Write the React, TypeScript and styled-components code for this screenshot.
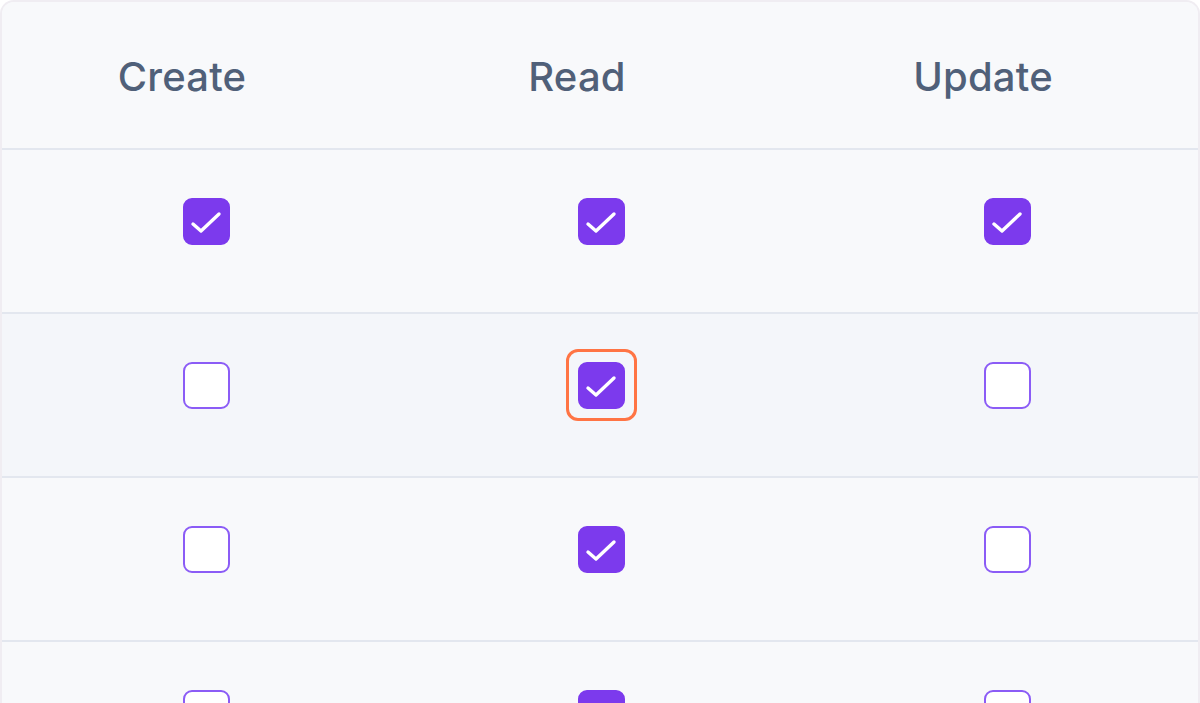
import React from "react";
import styled, { createGlobalStyle, css } from "styled-components";

const GlobalStyle = createGlobalStyle`
  html, body {
    margin: 0;
    padding: 0;
    background: #ffffff;
    font-family: Inter, "Noto Sans", sans-serif;
  }
  #root { width: 1200px; height: 703px; overflow: hidden; }
`;

const Table = styled.div`
  box-sizing: border-box;
  width: 1200px;
  border: 2px solid #f0edf2;
  border-bottom: none;
  border-radius: 14px 14px 0 0;
  background: #f8f9fb;
  overflow: hidden;
`;

const Row = styled.div<{ $header?: boolean; $hover?: boolean }>`
  display: grid;
  grid-template-columns: 384px 406px 1fr;
  border-bottom: 2px solid #e3e7ef;
  background: ${(p) => (p.$hover ? "#f4f6fa" : "#f8f9fb")};
  height: ${(p) => (p.$header ? "146px" : "162px")};
`;

const HeadCell = styled.div`
  display: flex;
  align-items: center;
  justify-content: center;
  padding-right: 24px;
  padding-top: 2px;
  font-size: 40px;
  font-weight: 500;
  color: #506079;
  letter-spacing: 0.2px;
`;

const Cell = styled.div`
  display: flex;
  justify-content: center;
  align-items: flex-start;
  padding-left: 24px;
  padding-top: 48px;
`;

const Box = styled.div<{ $checked?: boolean; $focus?: boolean }>`
  position: relative;
  box-sizing: border-box;
  width: 47px;
  height: 47px;
  border-radius: 9px;
  display: flex;
  align-items: center;
  justify-content: center;
  ${(p) =>
    p.$checked
      ? css`
          background: #7c3aed;
          border: 2px solid #7c3aed;
        `
      : css`
          background: #ffffff;
          border: 2.5px solid #8b5cf6;
        `}
  ${(p) =>
    p.$focus &&
    css`
      &::after {
        content: "";
        position: absolute;
        inset: -15px -14px -14px -14px;
        border: 3px solid #ff7444;
        border-radius: 12px;
      }
    `}
`;

const Check = () => (
  <svg width="43" height="43" viewBox="0 0 43 43" fill="none">
    <polyline
      points="8,24 16,31 34,14"
      stroke="#ffffff"
      strokeWidth="3.4"
      strokeLinecap="round"
      strokeLinejoin="round"
    />
  </svg>
);

const Checkbox = ({ checked, focus }: { checked?: boolean; focus?: boolean }) => (
  <Box $checked={checked} $focus={focus}>{checked && <Check />}</Box>
);

const rows: { c: boolean[]; hover?: boolean; focus?: number }[] = [
  { c: [true, true, true] },
  { c: [false, true, false], hover: true, focus: 1 },
  { c: [false, true, false] },
  { c: [false, true, false] },
];

export default function App() {
  return (
    <>
      <GlobalStyle />
      <Table>
        <Row $header>
          <HeadCell>Create</HeadCell>
          <HeadCell>Read</HeadCell>
          <HeadCell>Update</HeadCell>
        </Row>
        {rows.map((r, i) => (
          <Row key={i} $hover={r.hover}>
            {r.c.map((v, j) => (
              <Cell key={j}>
                <Checkbox checked={v} focus={r.focus === j} />
              </Cell>
            ))}
          </Row>
        ))}
      </Table>
    </>
  );
}
